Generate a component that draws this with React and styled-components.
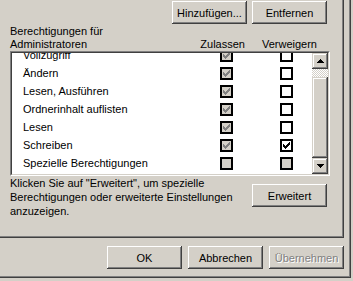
import React from 'react';
import styled, { createGlobalStyle } from 'styled-components';

const GlobalStyle = createGlobalStyle`
  html, body {
    margin: 0;
    padding: 0;
    background: #d4d0c8;
  }
  body {
    font-family: "Liberation Sans", Arial, sans-serif;
    font-size: 11px;
    color: #000;
  }
`
const Screen = styled.div`
  width: 353px;
  height: 281px;
  overflow: hidden;
  background: #d4d0c8;
`
const WindowFrame = styled.div`
  width: 351px;
  height: 278px;
  box-sizing: border-box;
  border-right: 1px solid #404040;
  border-bottom: 1px solid #404040;
`
const DialogBody = styled.div`
  height: 100%;
  box-sizing: border-box;
  border-right: 1px solid #808080;
  border-bottom: 1px solid #808080;
  padding-right: 5px;
  display: flex;
  flex-direction: column;
`
const TabPanel = styled.div`
  width: 344px;
  height: 238px;
  box-sizing: border-box;
  border-right: 1px solid #404040;
  border-bottom: 1px solid #404040;
`
const PanelFace = styled.div`
  height: 100%;
  box-sizing: border-box;
  border-right: 1px solid #808080;
  border-bottom: 1px solid #808080;
  padding: 1px 12px 0 10px;
  display: flex;
  flex-direction: column;
`
const TopButtons = styled.div`
  display: flex;
  justify-content: flex-end;
  gap: 5px;
  padding-right: 3px;
`
const Button = styled.button`
  width: 75px;
  height: 23px;
  padding: 0;
  margin: ${p => p.$margin || '0'};
  border: none;
  background: #d4d0c8;
  font: 11px "Liberation Sans", Arial, sans-serif;
  color: ${p => (p.disabled ? '#808080' : '#000')};
  text-shadow: ${p => (p.disabled ? '1px 1px 0 #fff' : 'none')};
  box-shadow: inset -1px -1px #404040, inset 1px 1px #fff,
    inset -2px -2px #808080, inset 2px 2px #d4d0c8;
  flex-shrink: 0;
`
const HeaderRow = styled.div`
  display: flex;
  align-items: flex-end;
  gap: 17px;
  margin-top: 1px;
  padding-right: 13px;
  line-height: 13px;
`
const Title = styled.div`
  flex: 1;
`
const ListFrame = styled.div`
  height: 125px;
  box-sizing: border-box;
  border: 1px solid;
  border-color: #808080 #fff #fff #808080;
`
const ListInner = styled.div`
  height: 100%;
  box-sizing: border-box;
  border: 1px solid;
  border-color: #404040 #d4d0c8 #d4d0c8 #404040;
  background: #fff;
  display: flex;
  overflow: hidden;
`
const Rows = styled.div`
  flex: 1;
  overflow: hidden;
`
const RowsContent = styled.div`
  margin-top: -7px;
`
const Row = styled.div`
  display: grid;
  grid-template-columns: 1fr 13px 13px;
  column-gap: 47px;
  align-items: center;
  height: 18px;
  line-height: 18px;
  padding: 0 19px 0 11px;
  white-space: nowrap;
`
const Box = styled.span`
  width: 13px;
  height: 13px;
  box-sizing: border-box;
  border: 2px solid #000;
  background: ${p => (p.$disabled ? '#d4d0c8' : '#fff')};
  display: flex;
  align-items: center;
  justify-content: center;
`
const Scrollbar = styled.div`
  width: 16px;
  display: flex;
  flex-direction: column;
`
const ScrollButton = styled.div`
  height: 16px;
  background: #d4d0c8;
  box-shadow: inset -1px -1px #404040, inset 1px 1px #d4d0c8,
    inset -2px -2px #808080, inset 2px 2px #fff;
  display: flex;
  align-items: center;
  justify-content: center;
`
const ScrollTrack = styled.div`
  flex: 1;
  display: flex;
  flex-direction: column;
  padding-top: 8px;
  background-color: #fff;
  background-image: conic-gradient(#d4d0c8 25%, #fff 0 50%, #d4d0c8 0 75%, #fff 0);
  background-size: 2px 2px;
`
const ScrollThumb = styled.div`
  flex: 1;
  background: #d4d0c8;
  box-shadow: inset -1px -1px #404040, inset 1px 1px #d4d0c8,
    inset -2px -2px #808080, inset 2px 2px #fff;
`
const HintRow = styled.div`
  display: flex;
  justify-content: space-between;
  align-items: flex-start;
`
const Hint = styled.p`
  margin: 0;
  line-height: 14px;
  white-space: nowrap;
`
const ButtonRow = styled.div`
  display: flex;
  justify-content: flex-end;
  gap: 6px;
  margin-top: 8px;
`

function CheckMark({ color }) {
  return (
    <svg width="7" height="7" viewBox="0 0 7 7" shapeRendering="crispEdges">
      <path
        fill={color}
        d="M6 0h1v1h-1z M5 1h2v1h-2z M0 2h1v1h-1z M4 2h3v1h-3z M0 3h2v1h-2z M3 3h3v1h-3z M0 4h5v1h-5z M1 5h3v1h-3z M2 6h1v1h-1z"
      />
    </svg>
  )
}

function CheckBox({ checked, disabled }) {
  return (
    <Box $disabled={disabled}>
      {checked && <CheckMark color={disabled ? '#808080' : '#000'} />}
    </Box>
  )
}

function Arrow({ down }) {
  return (
    <svg width="7" height="4" viewBox="0 0 7 4" shapeRendering="crispEdges">
      <path fill="#000" d={down ? 'M0 0h7l-3.5 4z' : 'M3.5 0l3.5 4h-7z'} />
    </svg>
  )
}

const permissions = [
  { name: 'Vollzugriff', allow: true, deny: false },
  { name: 'Ändern', allow: true, deny: false },
  { name: 'Lesen, Ausführen', allow: true, deny: false },
  { name: 'Ordnerinhalt auflisten', allow: true, deny: false },
  { name: 'Lesen', allow: true, deny: false },
  { name: 'Schreiben', allow: true, deny: true },
  { name: 'Spezielle Berechtigungen', allow: false, deny: false, special: true },
]

function App() {
  return (
    <Screen>
      <GlobalStyle />
      <WindowFrame>
        <DialogBody>
          <TabPanel>
            <PanelFace>
              <TopButtons>
                <Button>Hinzufügen...</Button>
                <Button>Entfernen</Button>
              </TopButtons>
              <HeaderRow>
                <Title>Berechtigungen für<br />Administratoren</Title>
                <span>Zulassen</span>
                <span>Verweigern</span>
              </HeaderRow>
              <ListFrame>
                <ListInner>
                  <Rows>
                    <RowsContent>
                      {permissions.map(p => (
                        <Row key={p.name}>
                          <span>{p.name}</span>
                          <CheckBox checked={p.allow} disabled />
                          <CheckBox checked={p.deny} disabled={p.special} />
                        </Row>
                      ))}
                    </RowsContent>
                  </Rows>
                  <Scrollbar>
                    <ScrollButton><Arrow /></ScrollButton>
                    <ScrollTrack>
                      <ScrollThumb />
                    </ScrollTrack>
                    <ScrollButton><Arrow down /></ScrollButton>
                  </Scrollbar>
                </ListInner>
              </ListFrame>
              <HintRow>
                <Hint>
                  Klicken Sie auf "Erweitert", um spezielle<br />
                  Berechtigungen oder erweiterte Einstellungen<br />
                  anzuzeigen.
                </Hint>
                <Button $margin="8px 3px 0 0">Erweitert</Button>
              </HintRow>
            </PanelFace>
          </TabPanel>
          <ButtonRow>
            <Button>OK</Button>
            <Button>Abbrechen</Button>
            <Button disabled>Übernehmen</Button>
          </ButtonRow>
        </DialogBody>
      </WindowFrame>
    </Screen>
  )
}

export default App;
